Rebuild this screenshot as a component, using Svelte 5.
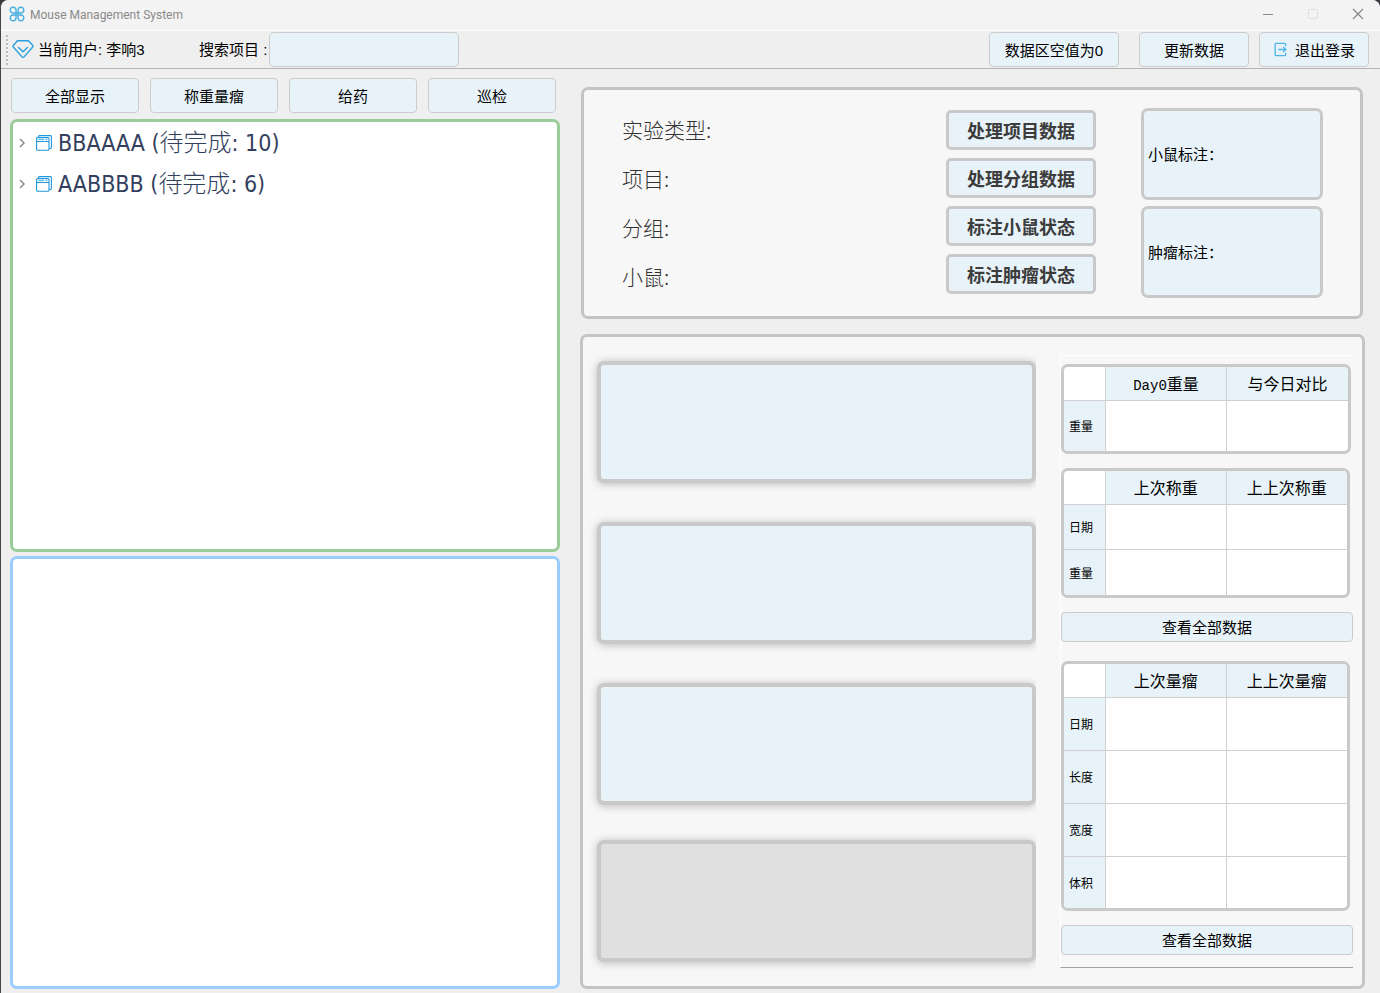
<script>
  const filters = ['全部显示', '称重量瘤', '给药', '巡检'];
  const projects = [
    { name: 'BBAAAA', pending: 10 },
    { name: 'AABBBB', pending: 6 }
  ];
  const fields = ['实验类型', '项目', '分组', '小鼠'];
  const actions = ['处理项目数据', '处理分组数据', '标注小鼠状态', '标注肿瘤状态'];
  const notes = ['小鼠标注：', '肿瘤标注：'];
  const panels = ['active', 'active', 'active', 'off'];
  let search = $state('');
</script>

{#snippet grid(kind, columns, rows)}
  <div class="table-frame {kind}">
    <table>
      <thead>
        <tr>
          <td class="corner"></td>
          {#each columns as c}
            <th scope="col"><span class="latin">{c.latin ?? ''}</span>{c.text}</th>
          {/each}
        </tr>
      </thead>
      <tbody>
        {#each rows as r}
          <tr>
            <th scope="row">{r}</th>
            <td></td>
            <td></td>
          </tr>
        {/each}
      </tbody>
    </table>
  </div>
{/snippet}

<div class="window">
  <header class="titlebar">
    <svg class="logo" viewBox="0 0 16 16" width="16" height="16" fill="none" stroke="#45aee2" stroke-width="1.4">
      <path d="M7 7H4.2A2.9 2.9 0 1 1 7 4.2zM9 7V4.2A2.9 2.9 0 1 1 11.800 7zM7 9v2.800A2.900 2.900 0 1 1 4.200 9zM9 9h2.800A2.900 2.900 0 1 1 9 11.800z" />
      <path d="M6.500 6.500l3 3M9.500 6.500l-3 3" />
    </svg>
    <h1>Mouse Management System</h1>
    <div class="controls">
      <button aria-label="最小化"><svg viewBox="0 0 12 12" width="12" height="12"><path d="M1 6.500h10" stroke="#8a8a8a" /></svg></button>
      <button aria-label="最大化" disabled><svg viewBox="0 0 12 12" width="12" height="12"><rect x="1.500" y="1.500" width="9" height="9" rx="1" fill="none" stroke="#dedede" /></svg></button>
      <button aria-label="关闭"><svg viewBox="0 0 12 12" width="12" height="12"><path d="M1 1l10 10M11 1L1 11" stroke="#858585" stroke-width="1.100" /></svg></button>
    </div>
  </header>

  <div class="toolbar">
    <span class="grip"></span>
    <svg class="gem" viewBox="0 0 22 20" width="22" height="20" fill="none" stroke="#2a9fe0" stroke-width="1.400" stroke-linejoin="round" stroke-linecap="round">
      <path d="M5.500 .8h11L20.800 5.500c.3.500.3 1-.1 1.500L12 16.900c-.6.700-1.400.7-2 0L1.300 7c-.4-.5-.4-1-.1-1.500z" />
      <path d="M6.500 7.600l4.500 4.200 4.500-4.200" />
    </svg>
    <span class="user">当前用户: 李响3</span>
    <label for="search">搜索项目 :</label>
    <input id="search" type="text" bind:value={search} />
    <div class="tools">
      <button class="btn wide">数据区空值为0</button>
      <button class="btn">更新数据</button>
      <button class="btn">
        <svg viewBox="0 0 14 14" width="15" height="15" fill="none" stroke="#4db3e6" stroke-width="1.200">
          <path d="M11.800 4V2.200a1 1 0 0 0-1-1H3a1 1 0 0 0-1 1v9.600a1 1 0 0 0 1 1h7.800a1 1 0 0 0 1-1V10" />
          <path d="M5 7h7M9.500 4.600L12 7 9.500 9.400" />
        </svg>
        退出登录
      </button>
    </div>
  </div>

  <main>
    <section class="left">
      <div class="filters">
        {#each filters as f}
          <button class="btn">{f}</button>
        {/each}
      </div>
      <ul class="tree">
        {#each projects as p}
          <li>
            <button>
              <svg class="chev" viewBox="0 0 8 12" width="8" height="12" fill="none" stroke="#8c8c8c" stroke-width="1.500"><path d="M2 2l4 4-4 4" /></svg>
              <svg class="book" viewBox="0 0 16 16" width="16" height="16" fill="none" stroke="#1f97dc" stroke-width="1.100">
                <rect x=".6" y="2.600" width="12.400" height="12.600" rx="1" />
                <path d="M.6 6.500h12.400M2.500 2.500V1.600a1 1 0 0 1 1-1h10.900a1 1 0 0 1 1 1v10.900a1 1 0 0 1-1 1H13" />
                <path d="M2.500 4.600h5.500M9.500 4.600h2" stroke-width=".8" />
              </svg>
              <span>{p.name} (<span class="cjk">待完成</span>: {p.pending})</span>
            </button>
          </li>
        {/each}
      </ul>
      <div class="detail"></div>
    </section>

    <section class="right">
      <div class="info">
        <div class="fields">
          {#each fields as f}
            <div>{f}:</div>
          {/each}
        </div>
        <div class="actions">
          {#each actions as a}
            <button>{a}</button>
          {/each}
        </div>
        <div class="notes">
          {#each notes as n}
            <div>{n}</div>
          {/each}
        </div>
      </div>

      <div class="work">
        <div class="cards">
          {#each panels as p}
            <div class="card {p}"></div>
          {/each}
        </div>
        <div class="side">
          {@render grid('base', [{ latin: 'Day0', text: '重量' }, { text: '与今日对比' }], ['重量'])}
          {@render grid('weights', [{ text: '上次称重' }, { text: '上上次称重' }], ['日期', '重量'])}
          <button class="btn all">查看全部数据</button>
          {@render grid('tumor', [{ text: '上次量瘤' }, { text: '上上次量瘤' }], ['日期', '长度', '宽度', '体积'])}
          <button class="btn all">查看全部数据</button>
        </div>
      </div>
    </section>
  </main>
</div>

<style>
  :global(body) {
    margin: 0;
    background: #3a3a3e;
  }
  * {
    box-sizing: border-box;
  }
  button,
  input {
    font: inherit;
    color: inherit;
    margin: 0;
    padding: 0;
  }
  .window {
    display: flex;
    flex-direction: column;
    min-height: 100vh;
    border-left: 1px solid #46464a;
    border-radius: 8px 8px 0 0;
    background: #efefef;
    font: 15px/20px 'Liberation Sans', 'Noto Sans CJK SC', sans-serif;
    color: #000;
  }
  .titlebar {
    display: flex;
    align-items: center;
    height: 31px;
    padding: 0 0 2px 8px;
    background: #f3f3f3;
    border-bottom: 1px solid #fff;
    border-radius: 8px 8px 0 0;
  }
  h1 {
    flex: 1;
    margin: 2px 0 0 5px;
    font: 12px/20px Roboto, sans-serif;
    color: #8a8a8a;
  }
  .controls {
    display: flex;
  }
  .controls button {
    display: grid;
    place-items: center;
    width: 45px;
    height: 28px;
    border: 0;
    background: none;
  }
  .toolbar {
    display: flex;
    align-items: center;
    height: 38px;
    padding: 0 11px 0 5px;
    border-bottom: 1px solid #b4b4b4;
  }
  .grip {
    width: 2px;
    height: 30px;
    background: repeating-linear-gradient(#bcbcbc 0 2px, transparent 2px 4px);
  }
  .gem {
    margin: 0 4px;
  }
  .user {
    width: 161px;
  }
  label {
    width: 70px;
  }
  input {
    width: 190px;
    height: 35px;
    padding: 0 8px;
    border: 1px solid #ccc;
    border-radius: 5px;
    background: #e8f3f9;
  }
  .tools {
    display: flex;
    gap: 10px;
    margin-left: auto;
  }
  .btn {
    display: flex;
    align-items: center;
    justify-content: center;
    gap: 7px;
    height: 35px;
    padding-top: 2px;
    border: 1px solid #ccc;
    border-radius: 4px;
    background: #e8f3f9;
  }
  .btn svg {
    margin-bottom: 3px;
  }
  .tools .btn {
    width: 110px;
  }
  .tools .wide {
    width: 130px;
    margin-right: 10px;
  }
  main {
    flex: 1;
    display: grid;
    grid-template-columns: minmax(0, 550fr) minmax(0, 785fr);
    gap: 20px;
    padding: 9px 15px 4px 9px;
  }
  .left {
    display: flex;
    flex-direction: column;
  }
  .filters {
    display: grid;
    grid-template-columns: repeat(4, 1fr);
    gap: 11px;
    padding: 0 4px 0 1px;
    margin-bottom: 6px;
  }
  .tree,
  .detail {
    flex: 1;
    margin: 0;
    border: 3px solid #99cc99;
    border-radius: 7px;
    background: #fff;
  }
  .tree {
    padding: 0;
    list-style: none;
  }
  .detail {
    margin-top: 4px;
    border-color: #99ccff;
  }
  .tree button {
    display: flex;
    align-items: center;
    width: 100%;
    height: 41px;
    padding-left: 5px;
    border: 0;
    background: none;
    font: 23px/32px 'DejaVu Sans Condensed', 'Noto Sans CJK SC', sans-serif;
    color: #333f5e;
    white-space: pre;
  }
  .book {
    margin: 0 6px 0 10px;
  }
  .cjk {
    font-size: 24px;
    font-weight: 300;
  }
  .right {
    display: flex;
    flex-direction: column;
    gap: 15px;
    padding-top: 9px;
  }
  .info,
  .work {
    border: 3px solid #c4c4c4;
    border-radius: 7px;
    background: #f7f7f7;
  }
  .info {
    display: grid;
    grid-template-columns: 1fr 150px 182px;
    column-gap: 45px;
    align-items: center;
    margin: 0 2px 0 1px;
    padding: 18px 37px 18px 38px;
  }
  .fields,
  .actions {
    display: grid;
    margin-bottom: 2px;
  }
  .fields {
    gap: 21px;
    font: 300 21px/28px 'Noto Sans CJK SC', sans-serif;
    color: #333;
  }
  .actions {
    gap: 8px;
  }
  .actions button {
    height: 40px;
    border: 3px solid #c9c9c9;
    border-radius: 5px;
    background: #e8f3f9;
    font: bold 18px/24px 'Noto Sans CJK SC', sans-serif;
    color: #3c3c3c;
  }
  .notes {
    display: grid;
    gap: 6px;
  }
  .notes div {
    display: flex;
    align-items: center;
    height: 92px;
    padding: 2px 0 0 4px;
    border: 3px solid #c9c9c9;
    border-radius: 7px;
    background: #e8f3f9;
  }
  .work {
    flex: 1;
    display: grid;
    grid-template-columns: 439fr 293fr;
    gap: 24px;
    padding: 0 9px 0 14px;
  }
  .cards {
    display: flex;
    flex-direction: column;
    gap: 35px;
    padding: 24px 0;
    clip-path: inset(0 0 0 -14px);
  }
  .card {
    flex: 1;
    border: 4px solid #c9c9c9;
    border-radius: 7px;
    background: #e8f3f9;
    box-shadow: 0 1px 8px rgba(0, 0, 0, 0.25);
  }
  .active + .active {
    margin-top: 4px;
  }
  .off {
    background: #e0e0e0;
  }
  .side {
    display: flex;
    flex-direction: column;
    gap: 14px;
    margin: 18px 0;
    padding-top: 8px;
    border: solid;
    border-width: 1px 0 1px 1px;
    border-color: #fff #fff #a0a0a0;
  }
  .table-frame {
    margin-right: 3px;
    border: 3px solid #c9c9c9;
    border-radius: 7px;
    overflow: hidden;
    background: #fff;
  }
  .base {
    margin-right: 2px;
  }
  table {
    width: 100%;
    border-collapse: separate;
    border-spacing: 0;
    table-layout: fixed;
  }
  td,
  th {
    padding: 0;
    border: solid #d0d0d0;
    border-width: 0 1px 1px 0;
  }
  tr > :last-child {
    border-right: 0;
  }
  tbody tr:last-child > * {
    border-bottom: 0;
  }
  .corner {
    width: 42px;
  }
  thead tr {
    height: 34px;
  }
  th {
    background: #e8f3f9;
    font: 400 16px/20px 'Noto Sans CJK SC', sans-serif;
  }
  thead th {
    padding-top: 2px;
  }
  .latin {
    font: 14px/20px 'Liberation Mono', monospace;
  }
  tbody th {
    padding-left: 5px;
    font-size: 12px;
    text-align: left;
  }
  .base tbody tr {
    height: 50px;
  }
  .weights tbody tr {
    height: 45px;
  }
  .tumor table {
    height: 244px;
  }
  .tumor {
    margin-top: 5px;
  }
  .all {
    height: 30px;
  }
</style>
